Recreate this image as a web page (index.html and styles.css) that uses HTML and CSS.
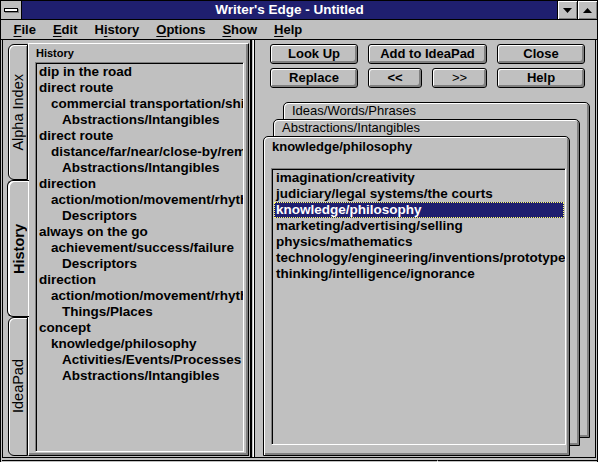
FILE: index.html
```html
<!DOCTYPE html>
<html lang="en">
<head>
    <meta charset="UTF-8">
    <title>Writer's Edge - Untitled</title>
    <link rel="stylesheet" href="styles.css">
</head>
<body>
    <div class="window">
        <div class="titlebar">
            <div class="sysmenu"><span class="sysbar"></span></div>
            <div class="title">Writer's Edge - Untitled</div>
            <div class="sizebtn">
                <svg width="9" height="5" viewBox="0 0 9 5"><polygon points="0,0 9,0 4.5,5" fill="#000"/></svg>
            </div>
            <div class="sizebtn">
                <svg width="9" height="5" viewBox="0 0 9 5"><polygon points="0,5 9,5 4.5,0" fill="#000"/></svg>
            </div>
        </div>

        <div class="menubar">
            <span class="menu-item"><u>F</u>ile</span>
            <span class="menu-item"><u>E</u>dit</span>
            <span class="menu-item">H<u>i</u>story</span>
            <span class="menu-item"><u>O</u>ptions</span>
            <span class="menu-item"><u>S</u>how</span>
            <span class="menu-item"><u>H</u>elp</span>
        </div>

        <div class="client">
            <div class="vtabs">
                <div class="vtab alpha"><span>Alpha Index</span></div>
                <div class="vtab history active"><span>History</span></div>
                <div class="vtab ideapad"><span>IdeaPad</span></div>
            </div>

            <div class="page">
                <div class="page-label">History</div>
                <div class="listbox history-list">
                    <div class="item l0">dip in the road</div>
                    <div class="item l0">direct route</div>
                    <div class="item l1">commercial transportation/shipping</div>
                    <div class="item l2">Abstractions/Intangibles</div>
                    <div class="item l0">direct route</div>
                    <div class="item l1">distance/far/near/close-by/remote</div>
                    <div class="item l2">Abstractions/Intangibles</div>
                    <div class="item l0">direction</div>
                    <div class="item l1">action/motion/movement/rhythm</div>
                    <div class="item l2">Descriptors</div>
                    <div class="item l0">always on the go</div>
                    <div class="item l1">achievement/success/failure</div>
                    <div class="item l2">Descriptors</div>
                    <div class="item l0">direction</div>
                    <div class="item l1">action/motion/movement/rhythm</div>
                    <div class="item l2">Things/Places</div>
                    <div class="item l0">concept</div>
                    <div class="item l1">knowledge/philosophy</div>
                    <div class="item l2">Activities/Events/Processes</div>
                    <div class="item l2">Abstractions/Intangibles</div>
                </div>
            </div>

            <div class="splitter"></div>

            <div class="right">
                <div class="buttons">
                    <div class="btn">Look Up</div>
                    <div class="btn span2">Add to IdeaPad</div>
                    <div class="btn">Close</div>
                    <div class="btn">Replace</div>
                    <div class="btn">&lt;&lt;</div>
                    <div class="btn thin">&gt;&gt;</div>
                    <div class="btn">Help</div>
                </div>

                <div class="stack">
                    <div class="card back">
                        <div class="card-label">Ideas/Words/Phrases</div>
                    </div>
                    <div class="card middle">
                        <div class="card-label">Abstractions/Intangibles</div>
                    </div>
                    <div class="card front">
                        <div class="card-label">knowledge/philosophy</div>
                        <div class="listbox topic-list">
                            <div class="item">imagination/creativity</div>
                            <div class="item">judiciary/legal systems/the courts</div>
                            <div class="item selected">knowledge/philosophy</div>
                            <div class="item">marketing/advertising/selling</div>
                            <div class="item">physics/mathematics</div>
                            <div class="item">technology/engineering/inventions/prototypes</div>
                            <div class="item">thinking/intelligence/ignorance</div>
                        </div>
                    </div>
                </div>
            </div>
        </div>

        <div class="statusbar">
            <div class="status-cell wide"></div>
            <div class="status-cell"></div>
        </div>
    </div>
</body>
</html>
```

FILE: styles.css
```css
* {
    box-sizing: border-box;
}

body {
    margin: 0;
    background: #c0c0c0;
    font-family: "Liberation Sans", Arial, sans-serif;
    font-size: 13px;
    font-weight: bold;
    color: #000;
}

.window {
    width: 598px;
    height: 462px;
    display: flex;
    flex-direction: column;
    border-top: 1px solid #000;
    border-left: 1px solid #000;
    border-right: 1px solid #000;
    background: #c0c0c0;
    overflow: hidden;
}

/* title bar */
.titlebar {
    display: flex;
    height: 19px;
    border-bottom: 1px solid #000;
}

.sysmenu {
    width: 21px;
    border-right: 1px solid #000;
    display: flex;
    align-items: center;
    justify-content: center;
}

.sysbar {
    width: 14px;
    height: 4px;
    border: 1px solid #000;
    background: #fff;
    box-shadow: 1px 1px 0 #808080;
}

.title {
    flex: 1;
    background: #1f1f6f;
    color: #fff;
    font-size: 13.5px;
    text-align: center;
    line-height: 18px;
}

.sizebtn {
    width: 20px;
    border-left: 1px solid #000;
    background: #c0c0c0;
    box-shadow: inset 1px 1px 0 #fff, inset -1px -1px 0 #808080;
    display: flex;
    align-items: center;
    justify-content: center;
}

/* menu */
.menubar {
    height: 20px;
    border-bottom: 1px solid #000;
    padding-left: 4px;
    display: flex;
    align-items: center;
}

.menu-item {
    padding: 0 8.5px;
    line-height: 18px;
}

.menu-item u {
    text-decoration-thickness: 1px;
    text-underline-offset: 2px;
}

/* client area */
.client {
    flex: 1;
    display: flex;
    margin: 0 1px;
    border-left: 1px solid #000;
    border-right: 1px solid #000;
    border-bottom: 1px solid #000;
    padding-left: 4px;
}

.vtabs {
    width: 21px;
    margin-top: 4px;
    display: flex;
    flex-direction: column;
}

.vtab {
    margin-left: 1px;
    width: 20px;
    border: 1px solid #000;
    border-radius: 6px 0 0 6px;
    box-shadow: inset 1px 1px 0 #fff, inset -1px 0 0 #808080;
    display: flex;
    align-items: center;
    justify-content: center;
    font-size: 14.5px;
    font-weight: normal;
}

.vtab span {
    writing-mode: vertical-rl;
    transform: rotate(180deg);
    white-space: nowrap;
}

.vtab.alpha { height: 136px; }
.vtab.history { height: 137px; }
.vtab.ideapad { height: 139px; }

.vtab.active {
    margin-left: 0;
    width: 22px;
    border-right: none;
    box-shadow: inset 2px 1px 0 #fff;
    font-weight: bold;
    position: relative;
    z-index: 1;
}

.page {
    width: 221px;
    height: 413px;
    margin-top: 3px;
    border-top: 1px solid #fff;
    border-left: 1px solid #fff;
    border-right: 1px solid #000;
    border-bottom: 1px solid #000;
    box-shadow: inset -2px -2px 0 #808080;
    padding-left: 6px;
}

.page-label {
    font-size: 11px;
    line-height: 14px;
    padding: 2px 0 0 1px;
}

.listbox {
    border-top: 1px solid #808080;
    border-left: 1px solid #808080;
    border-right: 1px solid #fff;
    border-bottom: 1px solid #fff;
    box-shadow: inset 1px 1px 0 #000;
    padding-top: 1px;
    padding-left: 1px;
    overflow: hidden;
}

.history-list {
    width: 209px;
    height: 390px;
    margin-top: 2px;
}

.item {
    font-size: 13.5px;
    line-height: 16px;
    white-space: nowrap;
    padding-left: 2px;
}

.item.l1 { padding-left: 14px; }
.item.l2 { padding-left: 25px; }

.splitter {
    width: 13px;
    background: linear-gradient(to right,
        #c0c0c0 0 1px, #000 1px 3px, #c0c0c0 3px 4px,
        #fff 4px 5px, #000 5px 6px, #c0c0c0 6px);
}

/* right side */
.right {
    flex: 1;
    padding-top: 4px;
}

.buttons {
    display: grid;
    grid-template-columns: 88px 54px 55px 88px;
    column-gap: 10px;
    row-gap: 4px;
    margin-left: 8px;
}

.btn {
    height: 20px;
    border: 1px solid #000;
    border-radius: 3px;
    box-shadow: inset 1px 1px 0 #fff, inset -2px -2px 0 #808080;
    display: flex;
    align-items: center;
    justify-content: center;
    padding-bottom: 1px;
}

.btn.span2 {
    grid-column: span 2;
}

.btn.thin {
    font-weight: normal;
}

.stack {
    display: grid;
    margin-top: 14px;
}

.card {
    grid-area: 1 / 1;
    border: 1px solid #000;
    border-radius: 5px 5px 0 0;
    background: #c0c0c0;
    box-shadow: inset 1px 1px 0 #fff, inset -2px -2px 0 #808080;
}

.card.back {
    margin-left: 21px;
    width: 307px;
    height: 336px;
}

.card.middle {
    margin-left: 11px;
    margin-top: 17px;
    width: 307px;
    height: 327px;
}

.card.front {
    margin-left: 1px;
    margin-top: 34px;
    width: 307px;
    height: 320px;
}

.card-label {
    padding-left: 8px;
    line-height: 16px;
    font-weight: normal;
    white-space: nowrap;
}

.card.front .card-label {
    font-weight: bold;
    padding-top: 2px;
}

.topic-list {
    width: 295px;
    height: 277px;
    margin: 13px 0 0 7px;
    padding: 1px 0 0 1px;
}

.topic-list .item {
    margin: 0 1px;
}

.item.selected {
    background: #1f1f6f;
    color: #fff;
    outline: 1px dotted #ffff66;
    outline-offset: -1px;
}

.statusbar {
    height: 4px;
    display: flex;
    padding-top: 2px;
    margin-left: 1px;
}

.status-cell {
    flex: 1;
    border-top: 1px solid #000;
}

.status-cell.wide {
    flex: none;
    width: 436px;
    border-right: 1px solid #fff;
}
```
